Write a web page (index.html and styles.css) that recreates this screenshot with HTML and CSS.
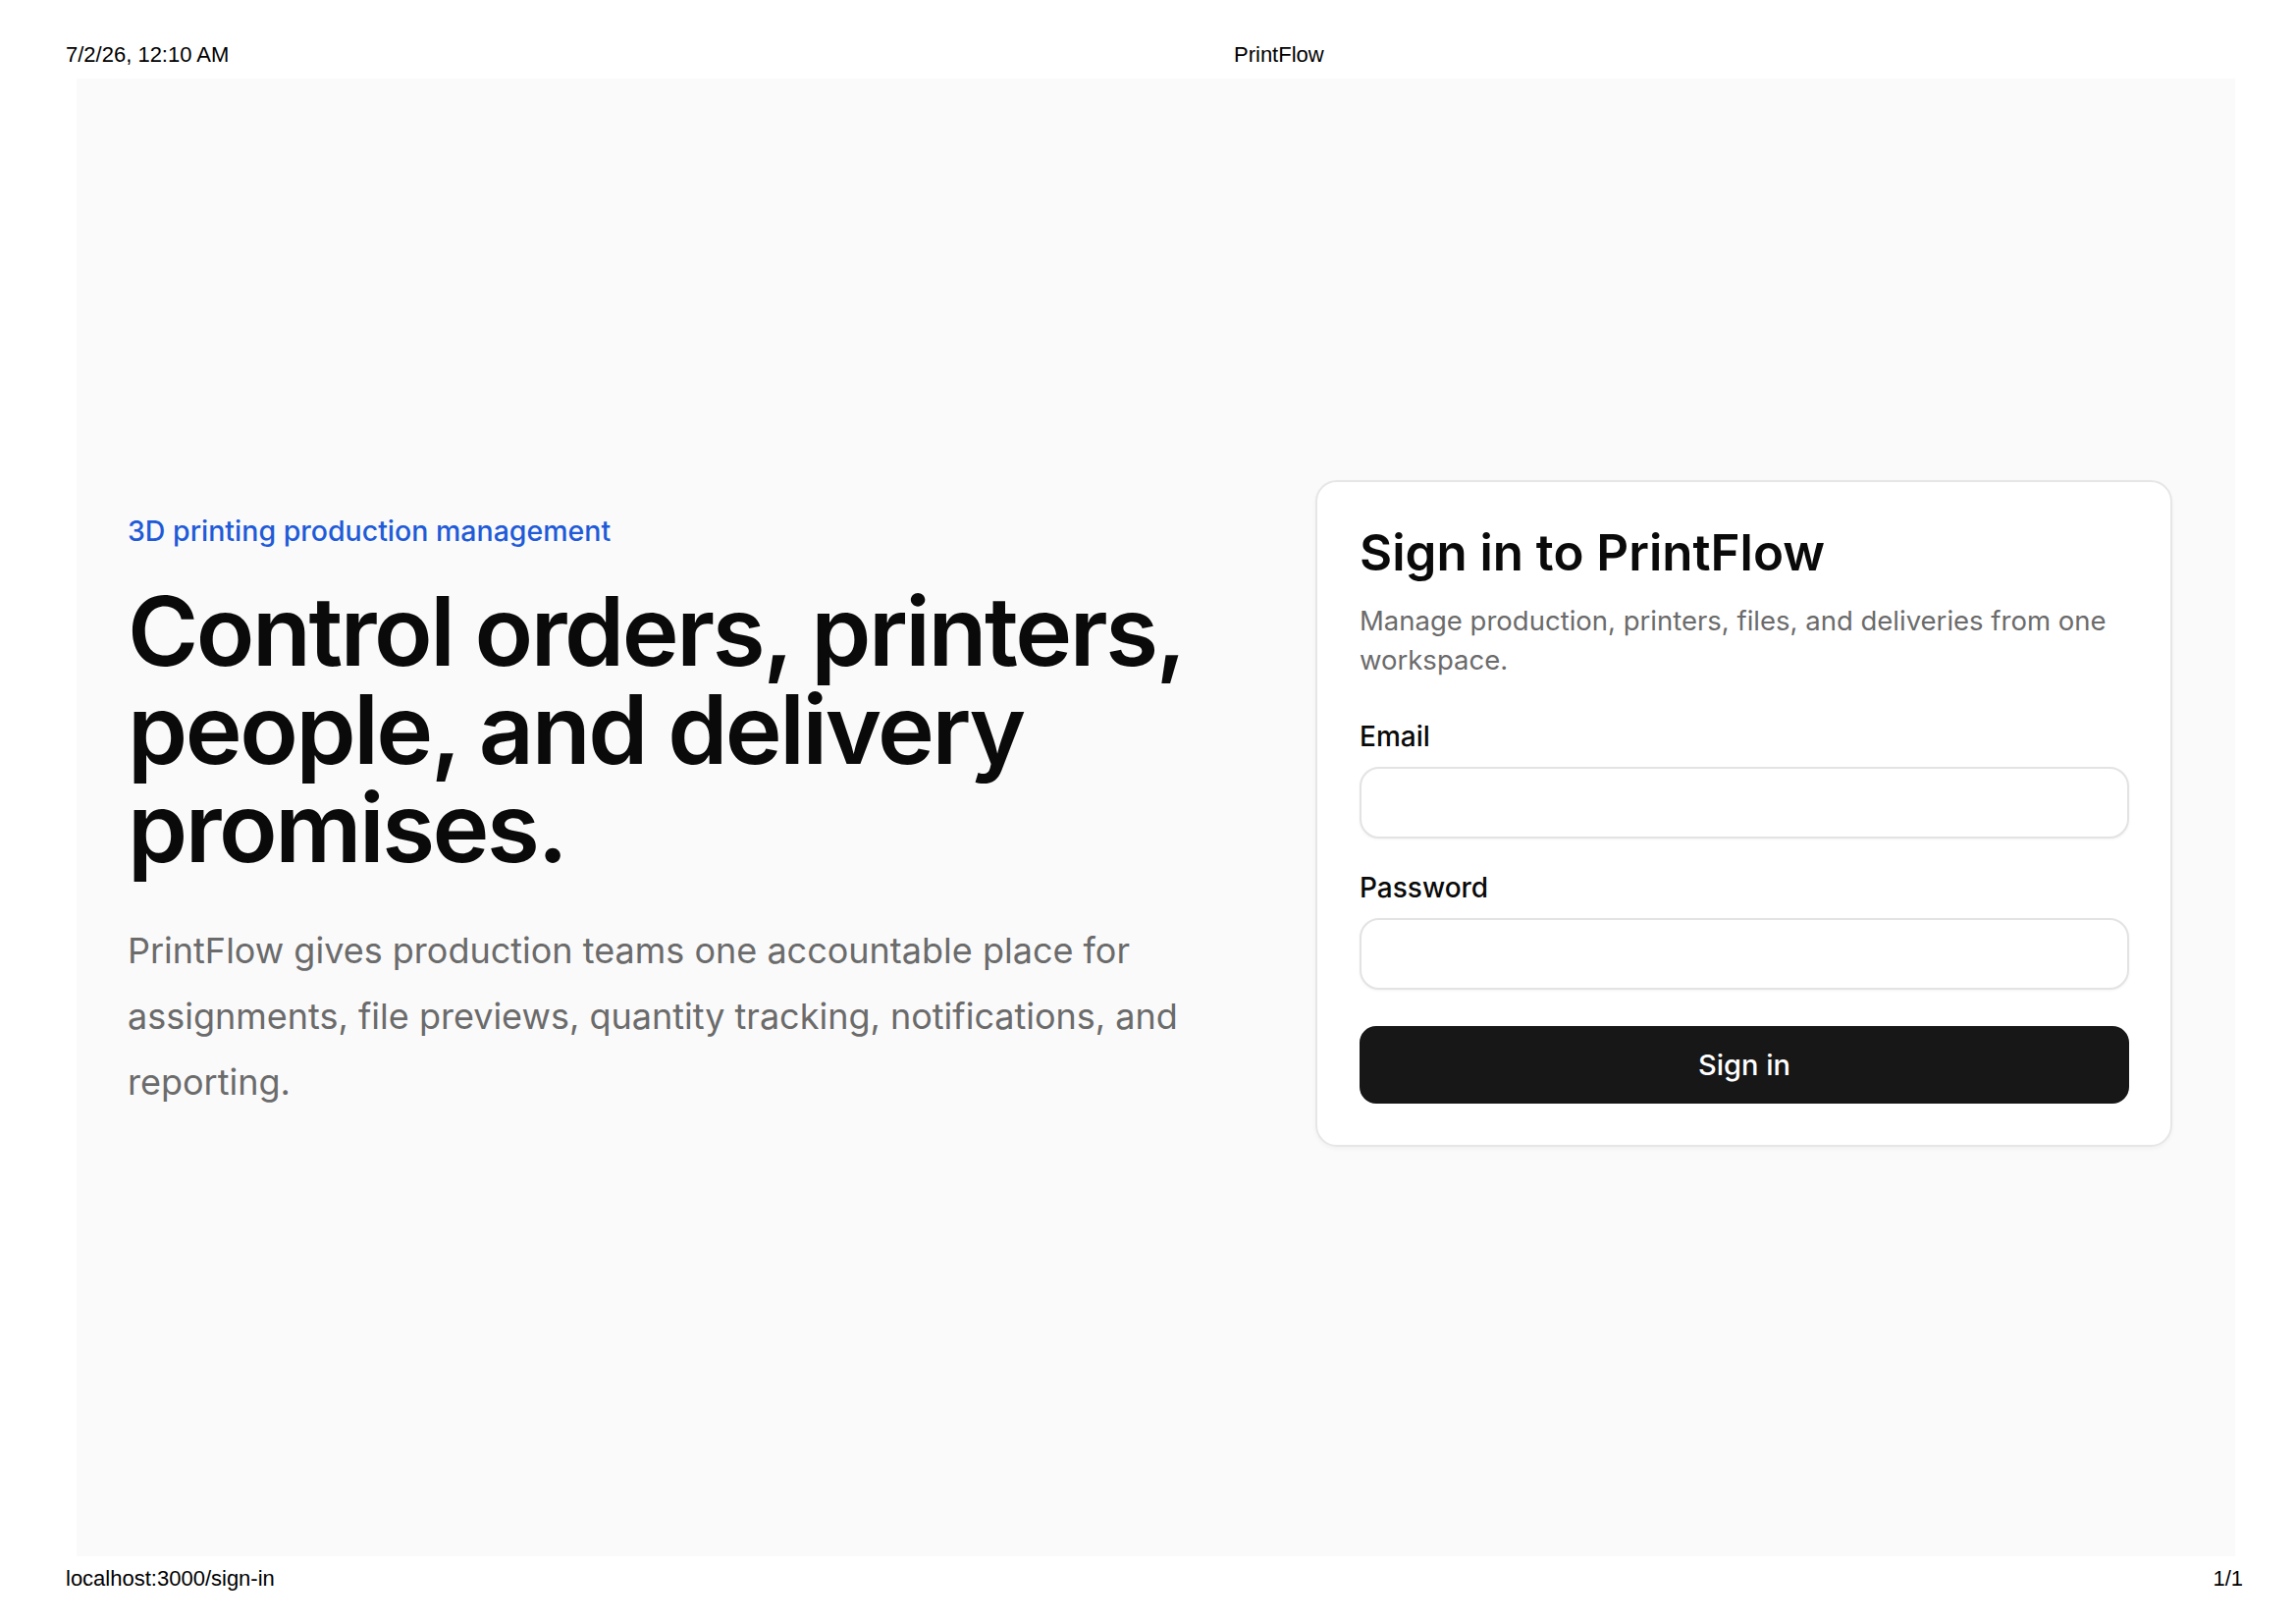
FILE: index.html
```html
<!DOCTYPE html>
<html lang="en">
<head>
<meta charset="utf-8">
<title>PrintFlow</title>
<link rel="stylesheet" href="styles.css">
</head>
<body>
<header class="print-header">
  <span class="print-date">7/2/26, 12:10 AM</span>
  <span class="print-title">PrintFlow</span>
</header>
<main class="page">
  <div class="hero">
    <section class="intro">
      <p class="eyebrow">3D printing production management</p>
      <h1 class="headline">Control orders, printers, people, and delivery promises.</h1>
      <p class="lead">PrintFlow gives production teams one accountable place for assignments, file previews, quantity tracking, notifications, and reporting.</p>
    </section>
    <section class="card">
      <h2 class="card-title">Sign in to PrintFlow</h2>
      <p class="card-desc">Manage production, printers, files, and deliveries from one workspace.</p>
      <form class="form">
        <label class="field">
          <span class="field-label">Email</span>
          <input class="field-input" type="email">
        </label>
        <label class="field">
          <span class="field-label">Password</span>
          <input class="field-input" type="password">
        </label>
        <button class="submit" type="button">Sign in</button>
      </form>
    </section>
  </div>
</main>
<footer class="print-footer">
  <span>localhost:3000/sign-in</span>
  <span>1/1</span>
</footer>
</body>
</html>
```
FILE: styles.css
```css
* { box-sizing: border-box; }
html, body { margin: 0; padding: 0; background: #ffffff; }
body {
  width: 2339px;
  height: 1654px;
  font-family: "Liberation Sans", Arial, sans-serif;
  color: #000;
}
.print-header {
  height: 80px;
  padding: 43px 0 0 67px;
  display: grid;
  grid-template-columns: 1190px auto;
  font-size: 22px;
  line-height: 26px;
}
.page {
  margin: 0 62px 0 78px;
  height: 1505px;
  background: #fafafa;
  display: flex;
  align-items: center;
  padding: 0 0 8px 52px;
  font-family: Inter, "Noto Sans", sans-serif;
}
.hero {
  display: grid;
  grid-template-columns: 1120px 873px;
  column-gap: 90px;
  align-items: center;
}
.intro { display: flex; flex-direction: column; }
.eyebrow {
  margin: 0;
  font-size: 28.5px;
  line-height: 40px;
  font-weight: 500;
  color: #1f5bd8;
}
.headline {
  margin: 32px 0 0;
  font-size: 98px;
  line-height: 100px;
  font-weight: 600;
  letter-spacing: -0.025em;
  color: #0a0a0a;
}
.lead {
  margin: 42px 0 0;
  font-size: 36px;
  line-height: 67px;
  color: #6b6b6b;
}
.card {
  background: #ffffff;
  border: 2px solid #e6e6e6;
  border-radius: 22px;
  padding: 42px 42px 42px 43px;
  box-shadow: 0 2px 4px rgba(0,0,0,0.04);
}
.card-title {
  margin: 0;
  font-size: 51px;
  line-height: 60px;
  font-weight: 600;
  color: #0a0a0a;
}
.card-desc {
  margin: 19px 0 0;
  font-size: 27.5px;
  line-height: 40px;
  color: #6b6b6b;
}
.form {
  margin-top: 38px;
  display: flex;
  flex-direction: column;
  gap: 30px;
}
.field { display: flex; flex-direction: column; gap: 11px; }
.field-label {
  font-size: 28px;
  line-height: 40px;
  font-weight: 500;
  color: #0a0a0a;
}
.field-input {
  height: 73px;
  width: 100%;
  border: 2px solid #e3e3e3;
  border-radius: 20px;
  background: #ffffff;
  box-shadow: 0 1px 3px rgba(0,0,0,0.05);
  font-family: inherit;
  font-size: 28px;
  padding: 0 20px;
  outline: none;
}
.submit {
  margin-top: 7px;
  height: 79px;
  width: 100%;
  border: none;
  border-radius: 17px;
  background: #171717;
  color: #ffffff;
  font-family: inherit;
  font-size: 29px;
  font-weight: 500;
}
.print-footer {
  display: flex;
  justify-content: space-between;
  padding: 10px 54px 0 67px;
  font-size: 22px;
  line-height: 26px;
}
```
